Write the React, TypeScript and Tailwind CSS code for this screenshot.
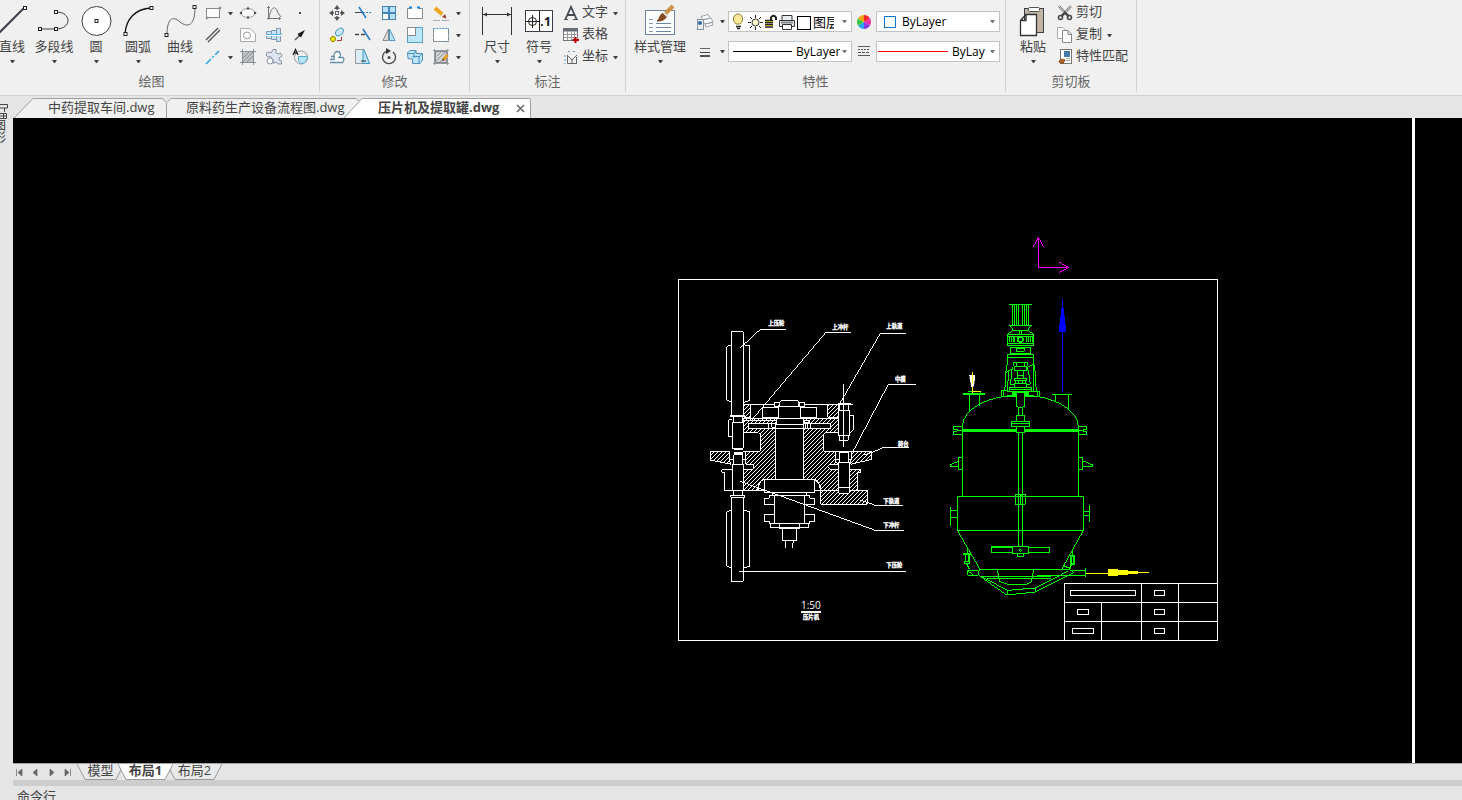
import React from 'react';
import clsx from 'clsx';

type Children = { children: React.ReactNode };

function Arrow({ light }: { light?: boolean }) {
  return (
    <svg width="5" height="3" viewBox="0 0 5 3" className="flex-shrink-0">
      <path d="M0 0H5L3 3H2Z" fill={light ? '#777' : '#444'} />
    </svg>
  );
}

function Icon({ children }: Children) {
  return (
    <svg width="18" height="18" viewBox="0 0 18 18" fill="none" stroke="#5b6470" className="flex-shrink-0">
      {children}
    </svg>
  );
}

/* square grip drawn on the end points of the big tools */
function Grip({ x, y }: { x: number; y: number }) {
  return <rect x={x - 1.5} y={y - 1.5} width="3" height="3" fill="#fff" stroke="#222" />;
}

function Group({ title, className, children }: Children & { title: string; className: string }) {
  return (
    <section className={clsx('flex h-[92px] flex-shrink-0 flex-col border-r border-[#d0d0d0]', className)}>
      <div className="flex h-[72px] items-start">{children}</div>
      <h2 className="text-center text-[13px] leading-[18px] text-[#666]">{title}</h2>
    </section>
  );
}

function BigButton({ label, wide, children }: Children & { label: string; wide?: boolean }) {
  return (
    <button type="button" className={clsx('flex flex-shrink-0 flex-col items-center pt-[3px]', wide ? 'w-15' : 'w-[42px]')}>
      <svg width="36" height="36" viewBox="0 0 36 36" fill="none" stroke="#3c3f4a">{children}</svg>
      <span className="mb-[7px] whitespace-nowrap leading-[14px]">{label}</span>
      <Arrow />
    </button>
  );
}

function Cell({ label, children }: Children & { label: string }) {
  return (
    <button type="button" aria-label={label} className="flex h-[22px] w-[26px] items-center justify-center">
      <Icon>{children}</Icon>
    </button>
  );
}

function DropCell({ label }: { label: string }) {
  return (
    <button type="button" aria-label={label} className="flex h-[22px] w-[9px] items-center justify-center">
      <Arrow />
    </button>
  );
}

function RowButton({ label, drop, children }: Children & { label: string; drop?: boolean }) {
  return (
    <button type="button" className="flex h-[22px] items-center">
      <span className="flex w-[22px] justify-center"><Icon>{children}</Icon></span>
      <span className="whitespace-nowrap pb-0.5 pr-[5px]">{label}</span>
      {drop && <Arrow />}
    </button>
  );
}

function Combo({ label, value, selectClass, children }: Children & { label: string; value: string; selectClass: string }) {
  return (
    <label className="flex h-[21px] w-31 items-center overflow-hidden border border-[#c3c3c3] bg-white pr-1">
      {children}
      <select aria-label={label} className={clsx('min-w-0 appearance-none overflow-hidden bg-transparent text-[12px] leading-4 text-black', selectClass)}>
        <option>{value}</option>
      </select>
      <span className="ml-auto"><Arrow light /></span>
    </label>
  );
}

function DrawGroup() {
  return (
    <Group title="绘图" className="w-80 pr-4">
      <div className="-ml-[9px] flex">
        <BigButton label="直线"><path d="M4 31L30 5" strokeWidth="2" /><Grip x={31} y={5} /></BigButton>
        <BigButton label="多段线">
          <path d="M4 26H20C36 26 36 9 20 9" /><Grip x={4} y={26} /><Grip x={20} y={26} /><Grip x={20} y={9} />
        </BigButton>
        <BigButton label="圆"><circle cx="18.500" cy="18" r="14.500" fill="#fff" /><Grip x={18.5} y={18} /></BigButton>
        <BigButton label="圆弧"><path d="M5 31C6 16 15 6 31 5" stroke="#111" strokeWidth="1.400" /><Grip x={5.5} y={31} /><Grip x={31.5} y={5} /></BigButton>
        <BigButton label="曲线"><path d="M5 32C5 12 13 14 18 19C26 25 33 23 33 4" stroke="#666" /><Grip x={4.5} y={32} /><Grip x={32.5} y={4} /></BigButton>
      </div>
      <div className="-ml-px grid grid-cols-[26px_9px_26px_26px_26px] pt-0.5">
        <Cell label="矩形">
          <rect x="2.500" y="4.500" width="13" height="9" fill="#fff" stroke="#888" />
          <g fill="#fff" stroke="#777"><circle cx="16" cy="4" r="1" /><circle cx="3" cy="14" r="1" /></g>
        </Cell>
        <DropCell label="矩形选项" />
        <Cell label="椭圆">
          <ellipse cx="9" cy="9" rx="7" ry="4.500" fill="#fff" stroke="#999" />
          <g fill="#555" stroke="none"><circle cx="2" cy="9" r="1.300" /><circle cx="16" cy="9" r="1.300" /><circle cx="9" cy="4.500" r="1.300" /><circle cx="9" cy="13.500" r="1.300" /></g>
        </Cell>
        <Cell label="函数曲线"><path d="M3.500 2V15.500M2 14.500H16M4 14C6 2 11 1 13 9L16 13M2 3.500H5M14.500 13V16" stroke="#777" /></Cell>
        <Cell label="点"><rect x="8" y="8" width="2" height="2" fill="#444" stroke="none" /></Cell>

        <Cell label="平行线"><path d="M2 14L14 2M4 16L16 4" stroke="#555" strokeWidth="1.400" /></Cell>
        <span />
        <Cell label="轮廓">
          <path d="M1.500 2.500H11L16.500 8V15.500H1.500Z" fill="#fff" stroke="#a9a9a9" /><circle cx="8" cy="9.500" r="3.500" stroke="#999" />
        </Cell>
        <Cell label="轴">
          <path d="M1.500 5.500H6.500V12.500H1.500ZM6.500 4.500H11.500V13.500H6.500ZM11.500 2.500H15.500V15.500H11.500Z" fill="#c5e2f8" stroke="#8496ad" />
          <path d="M1 9H17" stroke="#fff" strokeWidth="2" /><path d="M1 8.500H17" stroke="#5cb4ec" />
        </Cell>
        <Cell label="箭头"><path d="M4 14L10 8" stroke="#555" strokeWidth="1.500" /><path d="M14 4L6.500 8L10 11.500Z" fill="#111" stroke="none" /></Cell>

        <Cell label="中心线"><path d="M2 16L15 3" stroke="#28a6e0" strokeWidth="1.500" strokeDasharray="7 2 2 2" /></Cell>
        <DropCell label="中心线选项" />
        <Cell label="图案填充">
          <rect x="3.500" y="3.500" width="11" height="11" fill="#bfc3c8" stroke="#777" />
          <path d="M1 3.500H17M1 14.500H17M3.500 1V17M14.500 1V17M4 14L14 4M4 10L10 4M8 14L14 8" stroke="#8a8f96" />
        </Cell>
        <Cell label="齿轮">
          <path d="M1.500 8V5L4 4L6 5L8 1.500H11V5L13 6L15.500 5L17 8L14 10V12L16.500 13V16H13L11 14L8.500 15.500L8 12L5.500 8.500L3 9Z" fill="#dfe5ef" stroke="#8793a4" />
          <circle cx="5" cy="13" r="3" fill="#fff" stroke="#8793a4" />
        </Cell>
        <Cell label="局部放大">
          <circle cx="10" cy="9.500" r="6.500" stroke="#999" /><path d="M7.500 8.500H16.500C16.500 12 14 15.500 10 15.500L7.500 13Z" fill="#b5e4fb" stroke="#59a8cf" />
          <path d="M2 7L4.500 1.500L7 7M3 5H6" stroke="#222" strokeWidth="1.300" />
        </Cell>
      </div>
    </Group>
  );
}

function ModifyGroup() {
  return (
    <Group title="修改" className="w-[150px]">
      <div className="grid grid-cols-[26px_26px_26px_26px_26px_9px] pl-1 pt-0.5">
        <Cell label="移动">
          <path d="M9 3.500V6M9 12v3M3 9h3M12 9h3" stroke="#555" strokeWidth="1.500" />
          <path d="M9 1L12 5H6ZM9 17L6 13H12ZM1 9L5 6V12ZM17 9L13 12V6Z" fill="#555" stroke="none" /><rect x="7.500" y="7.500" width="3" height="3" fill="#fff" />
        </Cell>
        <Cell label="修剪"><path d="M1 8.500H8" stroke="#444" /><path d="M9 8.500H17" stroke="#3287d4" strokeDasharray="2 1" /><path d="M5 3L12 14" stroke="#2477c7" strokeWidth="1.500" /></Cell>
        <Cell label="阵列">
          <rect x="2.500" y="2.500" width="13" height="13" fill="#b9e2fb" stroke="#4484bb" /><path d="M9 3V15M3 9H15" stroke="#4484bb" strokeWidth="2" />
          <rect x="3" y="10" width="5" height="5" fill="#fff" stroke="none" />
        </Cell>
        <Cell label="打断"><path d="M6 4.500H1.500V14.500H16.500V4.500H12" fill="#fff" stroke="#888" /><path d="M3 3.500h3M11 3.500h3" stroke="#2385d5" strokeWidth="2" /></Cell>
        <Cell label="删除">
          <path d="M3 4L11 11" stroke="#f0a51e" strokeWidth="4" /><path d="M9.500 12.500L12.500 9" stroke="#fff" strokeWidth="1.500" /><path d="M10 13L13 10L14.500 14.500Z" fill="#963b28" stroke="none" /><path d="M1 16.500H8M10 16.500H17" stroke="#aaa" />
        </Cell>
        <DropCell label="删除选项" />

        <Cell label="复制">
          <circle cx="5" cy="13" r="2.500" fill="#fff000" stroke="#8a7c00" /><ellipse cx="11.500" cy="6" rx="4.500" ry="3" transform="rotate(-40 11.500 6)" fill="#c7e9fc" stroke="#559bc5" />
          <path d="M9 14.500H13.500V11" stroke="#a33" />
        </Cell>
        <Cell label="延伸"><path d="M1 8.500H5M7 8.500H11" stroke="#444" strokeWidth="1.300" /><path d="M9 3L16 14" stroke="#2477c7" strokeWidth="1.500" /></Cell>
        <Cell label="镜像"><path d="M8.500 3V14.500H3Z" fill="#ddd" stroke="#888" /><path d="M9.500 3V14.500H15Z" fill="#b9e2fb" stroke="#4f9bc4" /></Cell>
        <Cell label="缩放"><rect x="1.500" y="1.500" width="15" height="15" fill="#bce6fb" stroke="#5b9fc3" /><rect x="1.500" y="1.500" width="8" height="8" fill="#fff" stroke="#888" /></Cell>
        <Cell label="拉伸"><rect x="1.500" y="2.500" width="15" height="13" fill="#fff" stroke="#478fc4" strokeDasharray="2 1" /><path d="M1.500 4V15.500H16.500V4" stroke="#888" strokeDasharray="3 1" /></Cell>
        <DropCell label="拉伸选项" />

        <Cell label="偏移"><path d="M2 11.500H6C5 6 7 3.500 9.500 3.500S14 7 11 9.500H15Q17 11.500 14.500 14.500H2M3 8.500h4" fill="#fff" stroke="#6690a8" strokeWidth="1.300" /></Cell>
        <Cell label="倒角"><path d="M1.500 1.500H10L15.500 15.500H1.500Z" fill="#dceff9" stroke="#999" /><path d="M10 2L15.500 15.500H9V2Z" fill="#bce6fb" stroke="#4299c5" /><path d="M7 13H12" stroke="#333" /></Cell>
        <Cell label="旋转"><path d="M7 3A6.500 6.500 0 1 0 13 4" stroke="#444" strokeWidth="1.300" /><path d="M6 0L11 3L6 6Z" fill="#333" stroke="none" /><circle cx="9" cy="9.500" r="1.500" fill="#444" stroke="none" /></Cell>
        <Cell label="分解">
          <path d="M1.500 4.500L4 2.500H10V5.500H16.500V12L14 15.500H6.500V11L2 10.500Z" fill="#bce6fb" stroke="#4f91b8" /><path d="M2 5.500H8V10M8 5L10 3M6.500 8.500H13V15M13 9L16 6" stroke="#4f91b8" />
        </Cell>
        <Cell label="编辑填充">
          <rect x="3.500" y="3.500" width="11" height="11" fill="#cfd2d5" stroke="#888" /><path d="M1 2.500H17M2.500 1V17M1 15.500H17M15.500 1V17M4 13L13 4M5 8L9 4M8 14L14 8" stroke="#9599a0" />
          <path d="M11 12L15.500 7" stroke="#e99d25" strokeWidth="3" /><path d="M10 13L11 10.500L12.500 12Z" fill="#333" stroke="none" />
        </Cell>
        <DropCell label="填充选项" />
      </div>
    </Group>
  );
}

function AnnotateGroup() {
  return (
    <Group title="标注" className="w-[156px]">
      <div className="flex pl-1.5">
        <BigButton label="尺寸">
          <path d="M3.500 4V32M32.500 4V32M4 11.500H32" strokeWidth="1" stroke="#333" /><path d="M4 11.500L8 9.500V13.500ZM32 11.500L28 9.500V13.500Z" fill="#333" stroke="none" />
        </BigButton>
        <BigButton label="符号">
          <rect x="4.500" y="7.500" width="27" height="21" fill="#fff" /><path d="M18.500 8V28M5 18.500H18M11.500 12V25" stroke="#222" />
          <circle cx="11.500" cy="18.500" r="4" stroke="#222" />
          <text x="19" y="23" fontSize="13" fontWeight="700" fill="#222" stroke="none">.1</text>
        </BigButton>
      </div>
      <div className="pt-0.5">
        <RowButton label="文字" drop><path d="M3.500 15L9 3L14.500 15M5.500 11H12.500" stroke="#454b55" strokeWidth="1.800" /><path d="M2 15.500H6M11 15.500H16" stroke="#454b55" /></RowButton>
        <RowButton label="表格">
          <rect x="1.500" y="2.500" width="14" height="12" fill="#fff" stroke="#777" /><path d="M1 4H16" stroke="#676c75" strokeWidth="3" />
          <path d="M2 8.500H16M2 11.500H16M5.500 5V14M9.500 5V14M12.500 5V14" stroke="#999" /><path d="M13.500 11V17M10.500 14H17" stroke="#c00000" strokeWidth="2" />
        </RowButton>
        <RowButton label="坐标" drop>
          <path d="M5.500 7V15.500H15M6 8L10 12L15 7M10 12V16" stroke="#666" />
          <path d="M3 7v9M6 3.500h2M11 3.500h3" stroke="#55a1d5" strokeDasharray="2 2" /><path d="M14.500 9v6" stroke="#666" />
        </RowButton>
      </div>
    </Group>
  );
}

function PropertiesGroup() {
  return (
    <Group title="特性" className="w-95">
      <div className="flex pl-1">
        <BigButton label="样式管理" wide>
          <rect x="3.500" y="7.500" width="29" height="24" fill="#fff" stroke="#6c84a0" />
          <path d="M7 16.500H11M7 20.500H11M7 24.500H11M7 28.500H11" stroke="#8899ae" /><path d="M14 20.500H29M14 24.500H29M14 28.500H29" stroke="#6988a8" />
          <path d="M22 12L31 3" stroke="#cf9345" strokeWidth="4" /><path d="M15 18C18 17 17 11 22 10L25 13C23 17 19 18 15 18Z" fill="#8a4a1c" stroke="#6b3512" />
          <path d="M21 9L26 14" stroke="#ddd" strokeWidth="2" />
        </BigButton>
      </div>
      <div className="grid grid-cols-[30px_8px_124px_24px_124px] items-center gap-y-[9px] pt-[11px]">
        <button type="button" aria-label="图层" className="flex justify-center">
          <Icon>
            <path d="M5 3.500L12 1.500L14 5L7 7ZM6 7L15 5L17 9L9 11ZM9 11L16 9.500L17 12L10 14Z" fill="#fff" stroke="#98a2ae" />
            <rect x="1.500" y="6.500" width="6" height="10" fill="#eee" stroke="#8994a3" /><circle cx="4" cy="10" r="2" fill="#2b6da8" stroke="none" />
          </Icon>
        </button>
        <Arrow />
        <Combo label="图层列表" value="图层" selectClass="w-[21px] text-[13px]">
          <svg width="84" height="19" viewBox="0 0 84 19" fill="none" stroke="#222" className="flex-shrink-0">
            <path d="M7 12C2 8 5 2 9 2S16 8 11 12Z" fill="#ffe798" stroke="#8a7a3a" /><path d="M7 14.500H12M8 16.500H11" stroke="#222" strokeWidth="1.500" />
            <circle cx="26.500" cy="10.500" r="3.500" fill="#fff6c9" stroke="#333" />
            <path d="M26.500 3v3M26.500 15v3M19 10.500h3M31 10.500h3M21 5l2 2M30 14l2 2M21 16l2-2M30 7l2-2" />
            <path d="M36 8.500H44M36 10.500H44M36 12.500H44M36 15H44" stroke="#222" strokeWidth="1.500" /><path d="M42 9V5.500Q44.500 2 47 5.500V8" stroke="#222" strokeWidth="2" />
            <path d="M36 9.500H44M36 13.500H44" stroke="#b7aa00" />
            <path d="M53 8V3.500H63V8M50.500 8.500H65.500V14.500H50.500Z" fill="#e8ecef" stroke="#333" /><path d="M53.500 12.500H62.500V17.500H53.500Z" fill="#fff" stroke="#333" /><path d="M52 10.500H64" stroke="#888" strokeWidth="2" />
            <rect x="68.500" y="4.500" width="13" height="13" fill="#fff" stroke="#000" />
          </svg>
        </Combo>
        <span className="flex justify-center">
          <svg width="14" height="14" viewBox="-7 -7 14 14">
            <path d="M0 0V-7A7 7 0 0 1 6 -3.500Z" fill="#f52828" /><path d="M0 0L6 -3.500A7 7 0 0 1 6 3.500Z" fill="#f030a4" />
            <path d="M0 0L6 3.500A7 7 0 0 1 0 7Z" fill="#8b38e0" /><path d="M0 0V7A7 7 0 0 1 -6 3.500Z" fill="#29a4ee" />
            <path d="M0 0L-6 3.500A7 7 0 0 1 -6 -3.500Z" fill="#39c73c" /><path d="M0 0L-6 -3.500A7 7 0 0 1 0 -7Z" fill="#f7a018" />
          </svg>
        </span>
        <Combo label="颜色" value="ByLayer" selectClass="ml-[6px] w-20">
          <span className="ml-[7px] h-3 w-3 flex-shrink-0 border border-[#0b77d0]" />
        </Combo>

        <button type="button" aria-label="线宽" className="flex justify-center">
          <Icon><path d="M4 5.500H14" stroke="#666" /><path d="M4 9.500H14" stroke="#444" /><path d="M4 13H14" stroke="#555" strokeWidth="2" /></Icon>
        </button>
        <Arrow />
        <Combo label="线宽列表" value="ByLayer" selectClass="ml-1 w-11">
          <span className="ml-1 h-px w-[59px] flex-shrink-0 bg-black" />
        </Combo>
        <span className="flex justify-center">
          <svg width="12" height="11" viewBox="0 0 12 11" stroke="#555"><path d="M0 .5H12M0 9.500H12" /><path d="M0 3.500H12" strokeDasharray="2 1" /><path d="M0 6.500H12" strokeDasharray="3 1" /></svg>
        </span>
        <Combo label="线型列表" value="ByLayer" selectClass="ml-1 w-[33px]">
          <svg width="71" height="3" viewBox="0 0 71 3" className="flex-shrink-0"><path d="M1 1.500H71" stroke="#f00" /></svg>
        </Combo>
      </div>
    </Group>
  );
}

function ClipboardGroup() {
  return (
    <Group title="剪切板" className="w-[131px]">
      <div className="flex pl-1.5">
        <BigButton label="粘贴">
          <rect x="9.500" y="5.500" width="19" height="24" fill="#c2b5a6" /><rect x="13.500" y="4.500" width="11" height="4" rx="1" fill="#fff" stroke="#555" />
          <path d="M5.500 17.500L11 11.500H21.500V32.500H5.500ZM5.500 17.500H11V11.500" fill="#fff" stroke="#333" strokeWidth="1.300" />
        </BigButton>
      </div>
      <div className="pt-0.5">
        <RowButton label="剪切">
          <path d="M3 2L12 12M15 2L6 12" stroke="#777" strokeWidth="2.500" /><path d="M3 2L11 11M15 2L7 11" stroke="#ddd" />
          <path d="M8 8L13 12M10 8L5 12" stroke="#444" strokeWidth="2" />
          <circle cx="4.500" cy="13.500" r="2" stroke="#444" strokeWidth="1.500" /><circle cx="13.500" cy="13.500" r="2" stroke="#444" strokeWidth="1.500" />
        </RowButton>
        <RowButton label="复制" drop>
          <path d="M1.500 1.500H7L10.500 5V12.500H1.500Z" fill="#fff" stroke="#aaa" /><path d="M6.500 4.500H12L15.500 8V16.500H6.500ZM12 5V8.500H15" fill="#fff" stroke="#888" />
        </RowButton>
        <RowButton label="特性匹配">
          <rect x="4.500" y="1.500" width="11" height="14" fill="#fff" stroke="#777" /><rect x="8" y="3" width="6" height="6" fill="#4678a9" stroke="none" /><path d="M10 10.500H14M10 12.500H14" stroke="#aaa" />
          <path d="M3 14C4 10.500 7 11 9 12L7 15.500Z" fill="#b5651d" stroke="#8a4512" />
        </RowButton>
      </div>
    </Group>
  );
}

function FileTabs() {
  return (
    <nav className="flex h-[22px] items-end text-[13px] leading-5 text-[#444]">
      <a href="#doc1" className="ml-px flex">
        <svg width="19" height="20" viewBox="0 0 19 20"><path d="M0 20L19 .5V20Z" fill="#f0f0f0" /><path d="M0 20L19 .5" stroke="#a0a0a0" /></svg>
        <span className="w-[129px] whitespace-nowrap border-t border-[#a0a0a0] bg-[#f0f0f0] pl-[15px] leading-[17px]">中药提取车间.dwg</span>
        <svg width="5" height="20" viewBox="0 0 5 20"><path d="M0 .5L4.500 4.500V20H0Z" fill="#f0f0f0" /><path d="M0 .5L4.500 4.500V20" fill="none" stroke="#a0a0a0" /></svg>
      </a>
      <a href="#doc2" className="flex">
        <svg width="4" height="20" viewBox="0 0 4 20"><path d="M0 4.500L4 .5V20H0Z" fill="#f0f0f0" /><path d="M0 4.500L4 .5" stroke="#a0a0a0" /></svg>
        <span className="w-[185px] whitespace-nowrap border-t border-[#a0a0a0] bg-[#f0f0f0] pl-[15px] leading-[17px]">原料药生产设备流程图.dwg</span>
        <svg width="5" height="20" viewBox="0 0 5 20"><path d="M0 .5L4.500 4.500V20H0Z" fill="#f0f0f0" /><path d="M0 .5L4.500 4.500" stroke="#a0a0a0" /></svg>
      </a>
      <div className="-ml-[17px] flex">
        <svg width="18" height="20" viewBox="0 0 18 20"><path d="M0 20L18 .5V20Z" fill="#fff" /><path d="M0 20L18 .5" stroke="#a0a0a0" /></svg>
        <span className="flex h-5 w-[169px] items-center justify-between rounded-tr-xs border-r border-t border-[#a0a0a0] bg-white pl-4 pr-[5px]">
          <a href="#doc3" className="whitespace-nowrap pb-0.5 font-bold leading-[17px]">压片机及提取罐.dwg</a>
          <button type="button" aria-label="关闭">
            <svg width="9" height="9" viewBox="0 0 9 9" stroke="#666" strokeWidth="1.500"><path d="M1 1L8 8M8 1L1 8" /></svg>
          </button>
        </span>
      </div>
    </nav>
  );
}

const leaders = [
  { points: '257,58 181,58 121,113', x: 205, y: 46, name: '上压轮' },
  { points: '453,67 378,67 155,330', x: 397, y: 56, name: '上冲杆' },
  { points: '617,70 541,70 418,283', x: 559, y: 54, name: '上轨道' },
  { points: '648,223 565,223 459,424', x: 585, y: 213, name: '中模' },
  { points: '626,412 551,412 515,428 490,435', x: 594, y: 409, name: '转台' },
  { points: '609,586 526,586 480,570', x: 550, y: 578, name: '下轨道' },
  { points: '612,661 526,661 121,514', x: 550, y: 652, name: '下冲杆' },
  { points: '618,784 118,784', x: 559, y: 772, name: '下压轮' },
];

/* section through the tablet press, three drawing units to a screen pixel */
function PressSection() {
  return (
    <g transform="translate(700 310) scale(.33333)" fill="none" stroke="#fff" strokeWidth="3">
      <g fill="url(#hatch)">
        <path d="M130 325H230V357H226V508H193L180 515L172 541H132V478H160V463H137V424H181V374L175 368H130Z" />
        <path d="M310 325H415V368H377L371 374V424H407V455L415 463H390L382 470L390 478H415V541H362L355 515L345 508H310Z" />
        <path d="M31 425H90V455L94 463L31 450Z" />
        <path d="M455 425H515V448L452 463Z" />
        <path d="M448 479H482V487H473V541H448Z" />
        <path d="M362 541H502V583H362Z" />
        <path d="M132 283H152V322H132ZM383 283H415V322H383Z" />
      </g>
      <path d="M94 65H130V317H94ZM94 104L80 110V270L94 277M130 104L149 108V272L130 277" />
      <path d="M90 319H134" strokeWidth="5" />
      <path d="M100 320H128V338H100ZM97 338H130V415H97ZM97 330H86V380H97" />
      <path d="M101 418H130M101 431H130" strokeWidth="7" />
      <path d="M90 424V450H100M137 424V450H128M101 434V463H128V434" />
      <path d="M130 283H235M310 283H458M130 325H415M130 331H230M86 330H97" />
      <path d="M145 341H392V355H145Z" fill="#000" />
      <path d="M187 292H236V322H187ZM301 292H350V322H301ZM236 289H301V325H236ZM223 277H240V290H223ZM295 277H313V290H295ZM236 289L240 276L245 271H293L298 276V289" fill="#000" />
      <path d="M230 325H310V345H230ZM226 345H310V357H226Z" fill="#000" />
      <path d="M206 341V355M215 341H228V352H215ZM316 341V355M322 341V355M331 341V355M310 331H328V338H310M226 357V508M310 357V508M181 424H130M371 424H460" />
      <path d="M65 479H100M65 479V487H73V541H193M344 541H502M97 463H130V541H97ZM100 541V556H128V541M93 556H134V562H93Z" />
      <path d="M94 562H130V814H94ZM94 600L80 606V768L94 775M130 600L149 606V768L130 775" />
      <path d="M193 508H344V547H193ZM217 547V556H320V547M223 556H314V640H223Z" fill="#000" />
      <path d="M223 556H208V565H193V583H223M223 613H193V634H208V640H223M314 556H329V565H344V583H314M314 613H344V634H329V640H314" />
      <path d="M211 640H326V652H211ZM238 640H299V655H238ZM247 655H290V691H247ZM256 691V713M280 691V699L277 702V713" />
      <path d="M175 541V524L188 508M344 508L361 528V541" />
      <path d="M418 283H445V301H418ZM415 301H448V377H415ZM448 316H460V358L448 370M418 377H445V391H418Z" fill="#000" />
      <path d="M430 222V410M415 280H453M418 377H445" />
      <path d="M407 424V450H416M455 424V450H446M416 457H448V550H416ZM418 428H446V457H418Z" fill="#000" />
      <path d="M416 532H448M416 552H448" />
      {leaders.map((l) => (
        <g key={l.name}>
          <polyline points={l.points} />
          <text x={l.x} y={l.y} fontSize="16" fontWeight="700" fill="#fff" stroke="#fff" strokeWidth="1">{l.name}</text>
        </g>
      ))}
      <path d="M303 906H362" strokeWidth="5" />
      <text x="303" y="898" fontSize="30" fill="#fff" stroke="none">1:50</text>
      <text x="309" y="928" fontSize="16" fontWeight="700" fill="#fff" stroke="#fff" strokeWidth="1">压片机</text>
    </g>
  );
}

/* extraction tank with its agitator */
function Tank() {
  return (
    <g transform="translate(940 230) scale(.33333)" fill="none" stroke="#0f0" strokeWidth="3">
      <path d="M208 223H275M217 223V286M223 223V286M229 223V286M235 223V286M247 223V286M253 223V286M259 223V286M265 223V286M208 286H275" />
      <path d="M211 288L220 301H263L272 288M220 301L205 311M263 301L278 311M238 301V312M245 301V312" />
      <path d="M202 313H281V347H202ZM202 319H281M202 340H281M208 322V337M214 322V337M220 322V337M224 322V337M260 322V337M266 322V337M272 322V337M277 322V337" />
      <circle cx="241" cy="328" r="8" strokeWidth="5" />
      <path d="M211 352H272V371H211ZM229 355H253V364H229ZM202 373H281V382H202ZM202 382V400L197 430V460L193 484M281 382V400L286 430V460L290 484" />
      <path d="M221 397H262V409H221ZM229 397V409M254 397V409M223 411H260V421H223ZM232 421V445M250 421V445M232 436H250M223 446H260V451H223ZM226 451V460M235 451V460M247 451V460M256 451V460M223 460H260V472M223 460V472" />
      <path d="M208 472H274V484H208ZM208 478H274M184 481H202V484H299V499H184ZM190 484V499M293 484V499M217 410L214 440L211 463H223M262 410L268 440L271 463H260M217 416L205 424L203 484M265 411L281 403L280 484M196 430L206 422" />
      <path d="M217 487H229V496H217ZM254 487H266V496H254Z" fill="#0f0" />
      <path d="M67 600V590A174 95 0 0 1 415 590V600" />
      <path d="M229 487H254V528L249 532H234L229 528ZM235 532V556M247 532V556M229 556H254V574M229 556V574M214 574H269V589H214ZM214 580H269" fill="#000" />
      <path d="M68 601H415" strokeWidth="9" />
      <path d="M229 589H254V607H229Z" fill="#000" />
      <path d="M67 589H40V598H52V604H40V613H67M415 589H440V598H430V604H440V613H415M52 601H67M415 601H430" />
      <path d="M68 492H135" strokeWidth="6" />
      <path d="M85 485H123V490M88 492V546M118 492V527M336 493H396M346 493V514M385 493V540" />
      <path d="M67 600V799M415 600V799M235 607V949M247 607V949" />
      <path d="M67 682H55V718H67M55 694L31 704V709H55M415 682H428V718H415M428 692L458 705V709H428" />
      <path d="M52 799H430V901H52ZM226 793H256V823H226ZM235 823V800L247 795M241 793V823M31 831V888M31 841H52M31 862H52M448 825V876M430 844H448M430 856H448" />
      <path d="M52 901L120 1018H365L430 901" />
      <path d="M154 949H217V967H154ZM266 952H329V967H266ZM217 949H266V970H217ZM232 970H251V979H232Z" />
      <path d="M154 951H217" strokeWidth="5" />
      <path d="M241 957L245 961L241 965L237 961Z" />
      <path d="M83 956V970M70 972H92M76 972V994M87 972V994M73 994H89V1000H73ZM80 1000L88 1018M398 960V976M390 978H406M393 980V1000M402 980V1000M391 1002H404M395 1004L388 1018M365 1015L372 1008L392 1015" strokeWidth="4" />
      <path d="M115 1021H84V1036H115M84 1023L98 1034M120 1018L114 1030L122 1040L200 1095L286 1086L402 1027L390 1020L365 1018M122 1040H333M140 1045H333M292 1036H437M390 1021H437M437 1014V1040M130 1043L203 1081L286 1074L385 1023M203 1081V1095M286 1074V1086M172 1018L178 1054L204 1063H258L273 1056L282 1018" />
      <g stroke="#ff0">
        <path d="M437 1030H504M590 1027H627M97 426V490M97 485H123" />
        <path d="M505 1018H534V1021H564V1024H594V1031H564V1034H534V1037H505Z" fill="#ff0" />
      </g>
      <path d="M88 436H104V452L100 470H94L91 452Z" fill="#fff" stroke="#fff" strokeWidth="1" />
      <path d="M97 426V460" stroke="#ff0" />
      <path d="M367 207V489" stroke="#00f" />
      <path d="M363 235H371V258H375V282H378V305H357V282H360V258H363Z" fill="#00f" stroke="none" />
      <path d="M295 22V112H386M280 50L295 22L310 50M358 97L386 112L358 127" stroke="#f0f" />
    </g>
  );
}

function Canvas() {
  return (
    <div className="flex min-h-0 flex-1 bg-black">
      <svg className="min-w-0 flex-1" shapeRendering="crispEdges">
        <defs>
          <pattern id="hatch" width="12" height="12" patternUnits="userSpaceOnUse">
            <path d="M-2 14L14 -2M-2 2L2 -2M10 14L14 10" stroke="#fff" strokeWidth="3" />
          </pattern>
        </defs>
        <g transform="translate(-13 -118)" fill="none" stroke="#fff">
          <path d="M678.500 279.500H1217.500V640.500H678.500Z" />
          <path d="M1413.500 118V4000" strokeWidth="3" />
          <PressSection />
          <Tank />
          <path d="M1064.500 640V583.500H1217M1064 602.500H1217M1064 621.500H1217M1141.500 583V640M1178.500 583V640M1101.500 602V640" />
          <path d="M1070.500 590.500h65v5h-65zM1077.500 609.500h11v5h-11zM1072.500 628.500h21v5h-21zM1154.500 590.500h10v5h-10zM1154.500 609.500h10v5h-10zM1154.500 628.500h10v5h-10z" />
        </g>
      </svg>
    </div>
  );
}

const sheets = [
  { name: '模型', active: false, width: 'w-[31px]' },
  { name: '布局1', active: true, width: 'w-[39px]' },
  { name: '布局2', active: false, width: 'w-[39px]' },
];

const navIcons = [
  { label: '第一个', d: 'M1.500 1V8M7 1V8L3 4.500Z' },
  { label: '上一个', d: 'M6 1V8L2 4.500Z' },
  { label: '下一个', d: 'M3 1V8L7 4.500Z' },
  { label: '最后一个', d: 'M7.500 1V8M2 1V8L6 4.500Z' },
];

function SheetTabs() {
  return (
    <nav className="flex h-[17px] flex-shrink-0 border-t border-[#a0a0a0] text-[13px] text-[#444]">
      <div className="-ml-0.5 flex w-[66px] items-center">
        {navIcons.map((n) => (
          <button key={n.label} type="button" aria-label={n.label} className="flex w-4 justify-center">
            <svg width="9" height="9" viewBox="0 0 9 9" fill="#666" stroke="#666" strokeWidth=".7"><path d={n.d} /></svg>
          </button>
        ))}
      </div>
      {sheets.map((s, i) => {
        const fill = s.active ? '#fff' : '#e9e9e9';
        return (
          <a key={s.name} href={`#sheet${i}`} className={clsx('flex h-4', i > 0 && '-ml-1.5', s.active && 'relative z-10 font-bold')}>
            <svg width="8" height="16" viewBox="0 0 8 16"><path d="M0 0H8V15.500Z" fill={fill} /><path d="M0 0L8 15.500" stroke="#999" /></svg>
            <span className={clsx('whitespace-nowrap border-b border-[#999] text-center leading-[13px]', s.width, s.active ? 'bg-white' : 'bg-[#e9e9e9]')}>{s.name}</span>
            <svg width="8" height="16" viewBox="0 0 8 16"><path d="M0 0H8L0 15.500Z" fill={fill} /><path d="M8 0L0 15.500" stroke="#999" /></svg>
          </a>
        );
      })}
    </nav>
  );
}

export default function App() {
  return (
    <div className="flex h-screen flex-col overflow-hidden bg-[#e5e5e5] font-['Open_Sans','Noto_Sans_CJK_SC',sans-serif] text-[13px] text-[#444]">
      <header className="flex h-24 flex-shrink-0 overflow-hidden border-b border-[#d0d0d0] bg-[#f0f0f0]">
        <DrawGroup />
        <ModifyGroup />
        <AnnotateGroup />
        <PropertiesGroup />
        <ClipboardGroup />
      </header>
      <div className="flex min-h-0 flex-1">
        <aside className="flex w-[13px] flex-shrink-0 flex-col pt-2">
          <div className="w-2 overflow-hidden">
            <svg width="8" height="16" viewBox="0 0 8 16" fill="none" stroke="#444">
              <path d="M0 .5H7.500V4H0M4.500 4V8M0 9.500H6.500V14.500H0M0 12H6M3.500 10V14" />
            </svg>
            <span className="-ml-[6px] block w-3 text-[12px] leading-3 text-[#333]">图形</span>
          </div>
        </aside>
        <main className="flex min-w-0 flex-1 flex-col">
          <FileTabs />
          <Canvas />
          <SheetTabs />
          <div className="h-1.5 flex-shrink-0 bg-[#cdcdcd]" />
          <div className="h-3.5 flex-shrink-0 overflow-hidden pl-1 leading-5">命令行</div>
        </main>
      </div>
    </div>
  );
}
